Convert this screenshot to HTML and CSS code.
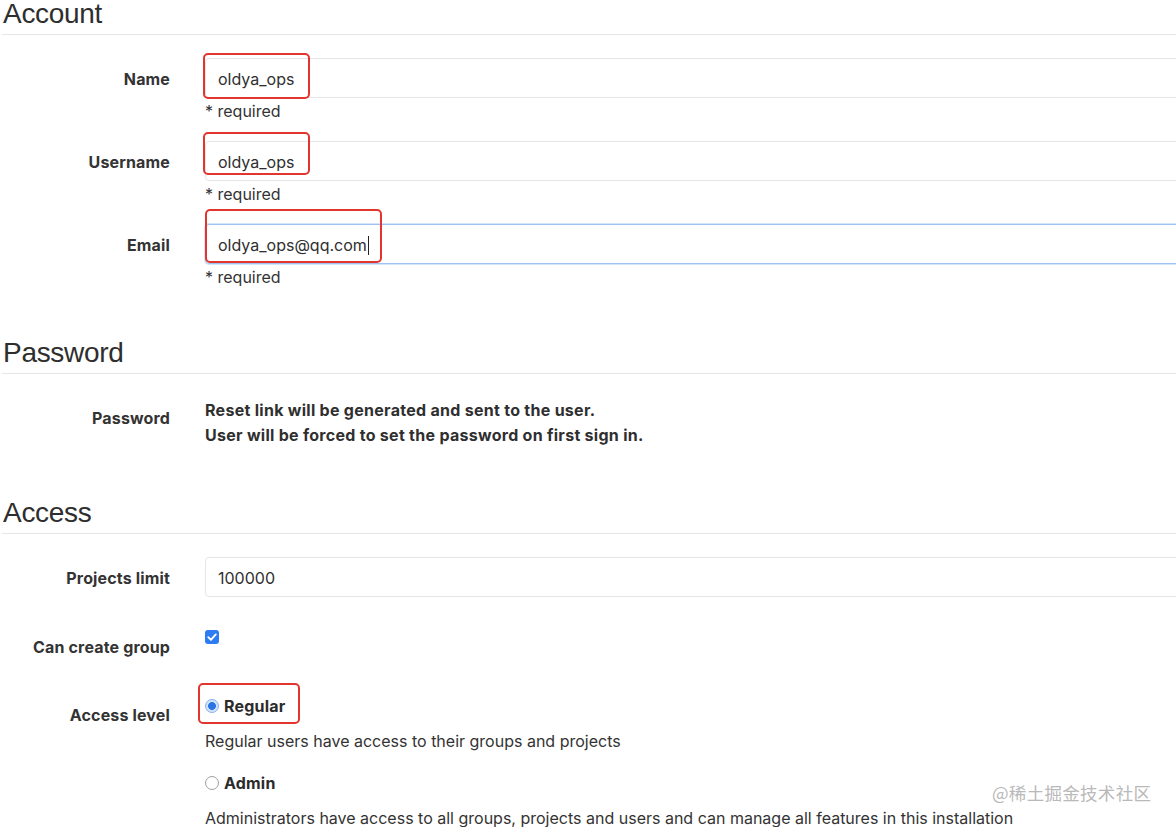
FILE: index.html
```html
<!DOCTYPE html>
<html lang="en">
<head>
<meta charset="utf-8">
<title>New user</title>
<link rel="stylesheet" href="styles.css">
</head>
<body>
<div class="page">
  <section class="section">
    <h3 class="section-title">Account</h3>
    <div class="form-group">
      <div class="control-label">Name</div>
      <div class="control">
        <div class="field">
          <div class="form-control">oldya_ops</div>
          <span class="mark mark-short"></span>
        </div>
        <div class="help">* required</div>
      </div>
    </div>
    <div class="form-group">
      <div class="control-label">Username</div>
      <div class="control">
        <div class="field">
          <div class="form-control">oldya_ops</div>
          <span class="mark mark-username"></span>
        </div>
        <div class="help">* required</div>
      </div>
    </div>
    <div class="form-group last">
      <div class="control-label">Email</div>
      <div class="control">
        <div class="field">
          <div class="form-control focused">oldya_ops@qq.com<span class="caret"></span></div>
          <span class="mark mark-email"></span>
        </div>
        <div class="help">* required</div>
      </div>
    </div>
  </section>

  <section class="section">
    <h3 class="section-title">Password</h3>
    <div class="form-group last">
      <div class="control-label">Password</div>
      <div class="control info">
        <div>Reset link will be generated and sent to the user.</div>
        <div>User will be forced to set the password on first sign in.</div>
      </div>
    </div>
  </section>

  <section class="section">
    <h3 class="section-title">Access</h3>
    <div class="form-group limit">
      <div class="control-label">Projects limit</div>
      <div class="control">
        <div class="form-control">100000</div>
      </div>
    </div>
    <div class="form-group group-check">
      <div class="control-label">Can create group</div>
      <div class="control">
        <span class="checkbox"><svg viewBox="0 0 14 14" width="14" height="14"><path d="M3.3 7.2 L5.9 9.8 L10.8 4.4" fill="none" stroke="#fff" stroke-width="1.9" stroke-linecap="round" stroke-linejoin="round"/></svg></span>
      </div>
    </div>
    <div class="form-group last">
      <div class="control-label">Access level</div>
      <div class="control">
        <div class="radio-line">
          <span class="radio checked"></span><span class="radio-label">Regular</span>
          <span class="mark mark-regular"></span>
        </div>
        <div class="desc">Regular users have access to their groups and projects</div>
        <div class="radio-line second">
          <span class="radio"></span><span class="radio-label">Admin</span>
        </div>
        <div class="desc">Administrators have access to all groups, projects and users and can manage all features in this installation</div>
      </div>
    </div>
  </section>

  <div class="watermark">@稀土掘金技术社区</div>
</div>
</body>
</html>
```

FILE: styles.css
```css
html, body {
  margin: 0;
  padding: 0;
  background: #ffffff;
}

body {
  font-family: Inter, "Liberation Sans", Arial, sans-serif;
  color: #2f2f2f;
  overflow: hidden;
}

.page {
  position: relative;
  width: 1176px;
  height: 827px;
  overflow: hidden;
}

.section {
  margin-bottom: 51px;
}

.section-title {
  margin: 0 0 23px 2px;
  padding: 0 0 6px 1px;
  font-family: "Liberation Sans", Arial, sans-serif;
  font-size: 28px;
  line-height: 28px;
  font-weight: 400;
  letter-spacing: -0.3px;
  color: #2e2e2e;
  border-bottom: 1px solid #e7e7e7;
}

.form-group {
  display: grid;
  grid-template-columns: 170px 1fr;
  column-gap: 35px;
  margin-bottom: 19px;
}

.form-group.last {
  margin-bottom: 0;
}

.form-group.limit {
  margin-bottom: 30px;
}

.form-group.group-check {
  margin-bottom: 36px;
}

.control-label {
  text-align: right;
  font-weight: 700;
  font-size: 16px;
  letter-spacing: 0.15px;
  line-height: 22px;
  padding-top: 10px;
  color: #333333;
}

.group-check .control-label {
  padding-top: 9px;
}

.control {
  margin-right: -30px;
  font-size: 16px;
}

.field {
  position: relative;
}

.form-control {
  box-sizing: border-box;
  height: 40px;
  border: 1px solid #e6e6e6;
  border-radius: 4px;
  background: #fff;
  padding: 1px 12px 0;
  font-size: 16px;
  line-height: 38px;
  color: #2f2f2f;
}

.form-control.focused {
  border-color: #9fc2f2;
  box-shadow: 0 0 0 1px #d5e5fb;
}

.caret {
  display: inline-block;
  width: 1px;
  height: 19px;
  background: #222;
  vertical-align: -4px;
  margin-left: 1px;
}

.help {
  margin-top: 2px;
  line-height: 22px;
  color: #333;
}

.info {
  font-weight: 700;
  line-height: 25px;
  letter-spacing: 0.28px;
  padding-top: 1px;
  color: #2f2f2f;
}

.checkbox {
  display: block;
  width: 14px;
  height: 14px;
  margin-top: 3px;
  border-radius: 3px;
  background: #2e7cf3;
}

.checkbox svg {
  display: block;
}

.radio-line {
  position: relative;
  display: flex;
  align-items: center;
  height: 22px;
  margin-top: 1px;
}

.radio-line.second {
  margin-top: 20px;
}

.radio {
  flex: none;
  box-sizing: border-box;
  width: 14px;
  height: 14px;
  border-radius: 50%;
  border: 1px solid #a0a0a0;
  background: #fff;
  margin-right: 5px;
}

.radio.checked {
  border: 1px solid #86b1ef;
  background: radial-gradient(circle, #2a74e6 0 3.6px, #d3e3fb 4.2px);
}

.radio-label {
  font-weight: 700;
  font-size: 16px;
  letter-spacing: 0.2px;
  color: #2b2b2b;
}

.desc {
  margin-top: 13px;
  line-height: 22px;
  color: #333;
}

.mark {
  position: absolute;
  box-sizing: border-box;
  border: 2.5px solid #e2352e;
  border-radius: 5px;
  pointer-events: none;
}

.mark-short {
  left: -2px;
  top: -5px;
  width: 107px;
  height: 46px;
}

.mark-username {
  left: -2px;
  top: -9px;
  width: 107px;
  height: 43px;
}

.mark-email {
  left: 0;
  top: -15px;
  width: 177px;
  height: 54px;
}

.mark-regular {
  left: -7px;
  top: -12px;
  width: 102px;
  height: 41px;
}

.watermark {
  position: absolute;
  left: 992px;
  top: 782px;
  font-family: "Noto Sans CJK SC", "Liberation Sans", sans-serif;
  font-size: 17.5px;
  line-height: 22px;
  color: #b9b9b9;
  letter-spacing: 0.3px;
}
```
